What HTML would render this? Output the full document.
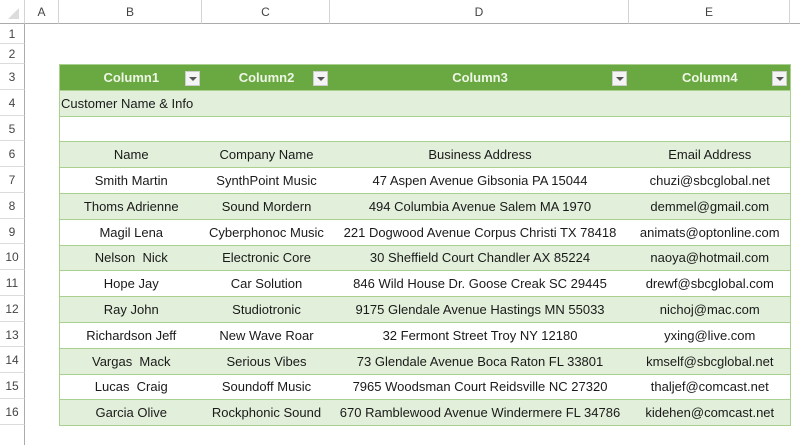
<!DOCTYPE html>
<html><head><style>
*{margin:0;padding:0;box-sizing:border-box}
body{width:800px;height:436px;background:#fff;font-family:"Liberation Sans",sans-serif;position:relative;overflow:hidden;color:#1a1a1a}
.ch{position:absolute;top:0;height:24px;background:#fff;border-right:1px solid #d4d4d4;border-bottom:1px solid #ababab;font-size:12px;color:#444;text-align:center;line-height:25px}
.rh{position:absolute;left:0;width:25px;border-bottom:1px solid #dcdcdc;border-right:1px solid #ababab;font-size:12px;color:#444;text-align:center}
table{position:absolute;left:59px;top:64px;border-collapse:collapse;font-size:13px;table-layout:fixed}
td{height:25.8px;text-align:center;padding:0;white-space:nowrap;border-top:1px solid #a9d08e;overflow:visible}
tr.g td{background:#e2efda}
tr.h td{background:#6aa842;color:#eef6e6;font-weight:bold;position:relative}
.dd{position:absolute;right:3px;top:6px;width:15px;height:15px;background:#f4f4f4;border:1px solid #ccc}
.dd:after{content:"";position:absolute;left:3px;top:5px;border-left:4px solid transparent;border-right:4px solid transparent;border-top:4px solid #555}
</style></head><body>
<div class="ch" style="left:0;width:25px"><svg width="25" height="24"><polygon points="19,8 19,19 8,19" fill="#dcdcdc"/></svg></div>
<div class="ch" style="left:25px;width:34px">A</div>
<div class="ch" style="left:59px;width:143px">B</div>
<div class="ch" style="left:202px;width:128px">C</div>
<div class="ch" style="left:330px;width:299px">D</div>
<div class="ch" style="left:629px;width:161px">E</div>
<div class="ch" style="left:790px;width:10px;border-right:none"></div>
<div class="rh" style="top:24px;height:20px;line-height:20px">1</div>
<div class="rh" style="top:44px;height:20px;line-height:20px">2</div>
<div class="rh" style="top:64px;height:26px;line-height:26px">3</div>
<div class="rh" style="top:90px;height:26px;line-height:26px">4</div>
<div class="rh" style="top:116px;height:25px;line-height:26px">5</div>
<div class="rh" style="top:141px;height:26px;line-height:26px">6</div>
<div class="rh" style="top:167px;height:26px;line-height:26px">7</div>
<div class="rh" style="top:193px;height:26px;line-height:26px">8</div>
<div class="rh" style="top:219px;height:25px;line-height:26px">9</div>
<div class="rh" style="top:244px;height:26px;line-height:26px">10</div>
<div class="rh" style="top:270px;height:26px;line-height:26px">11</div>
<div class="rh" style="top:296px;height:26px;line-height:26px">12</div>
<div class="rh" style="top:322px;height:25px;line-height:26px">13</div>
<div class="rh" style="top:347px;height:26px;line-height:26px">14</div>
<div class="rh" style="top:373px;height:26px;line-height:26px">15</div>
<div class="rh" style="top:399px;height:26px;line-height:26px">16</div>
<div class="rh" style="top:425px;height:20px;border-bottom:none"></div>
<table style="border:1px solid #a9d08e;width:731px">
<colgroup><col style="width:143px"><col style="width:128px"><col style="width:299px"><col style="width:161px"></colgroup>
<tr class="h"><td>Column1<span class="dd"></span></td><td>Column2<span class="dd"></span></td><td>Column3<span class="dd"></span></td><td>Column4<span class="dd"></span></td></tr>
<tr class="g"><td colspan="4" style="text-align:left;padding-left:1px">Customer Name &amp; Info</td></tr>
<tr><td></td><td></td><td></td><td></td></tr>
<tr class="g"><td>Name</td><td>Company Name</td><td>Business Address</td><td>Email Address</td></tr>
<tr><td>Smith Martin</td><td>SynthPoint Music</td><td>47 Aspen Avenue Gibsonia PA 15044</td><td>chuzi@sbcglobal.net</td></tr>
<tr class="g"><td>Thoms Adrienne</td><td>Sound Mordern</td><td>494 Columbia Avenue Salem MA 1970</td><td>demmel@gmail.com</td></tr>
<tr><td>Magil Lena</td><td>Cyberphonoc Music</td><td>221 Dogwood Avenue Corpus Christi TX 78418</td><td>animats@optonline.com</td></tr>
<tr class="g"><td>Nelson&nbsp; Nick</td><td>Electronic Core</td><td>30 Sheffield Court Chandler AX 85224</td><td>naoya@hotmail.com</td></tr>
<tr><td>Hope Jay</td><td>Car Solution</td><td>846 Wild House Dr. Goose Creak SC 29445</td><td>drewf@sbcglobal.com</td></tr>
<tr class="g"><td>Ray John</td><td>Studiotronic</td><td>9175 Glendale Avenue Hastings MN 55033</td><td>nichoj@mac.com</td></tr>
<tr><td>Richardson Jeff</td><td>New Wave Roar</td><td>32 Fermont Street Troy NY 12180</td><td>yxing@live.com</td></tr>
<tr class="g"><td>Vargas&nbsp; Mack</td><td>Serious Vibes</td><td>73 Glendale Avenue Boca Raton FL 33801</td><td>kmself@sbcglobal.net</td></tr>
<tr><td>Lucas&nbsp; Craig</td><td>Soundoff Music</td><td>7965 Woodsman Court Reidsville NC 27320</td><td>thaljef@comcast.net</td></tr>
<tr class="g"><td>Garcia Olive</td><td>Rockphonic Sound</td><td>670 Ramblewood Avenue Windermere FL 34786</td><td>kidehen@comcast.net</td></tr>
</table>
</body></html>
